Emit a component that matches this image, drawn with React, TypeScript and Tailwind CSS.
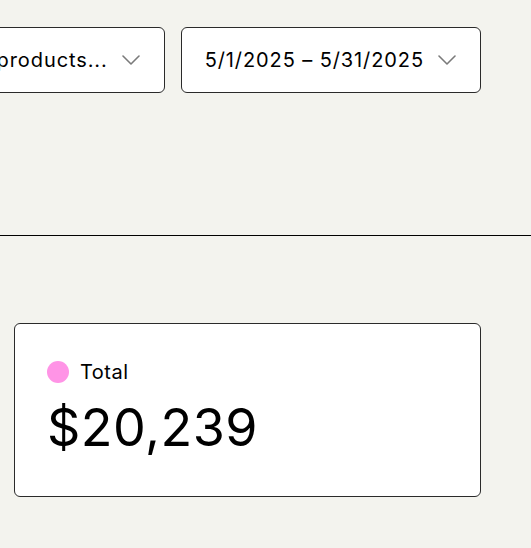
function Chevron() {
  return (
    <svg width="18" height="10" viewBox="0 0 18 10" fill="none" className="shrink-0">
      <path d="M1 1l8 8 8-8" stroke="#7a7a7a" strokeWidth="1.6" strokeLinecap="round" strokeLinejoin="round" />
    </svg>
  )
}

function Select({ label }: { label: string }) {
  return (
    <button className="flex h-[66px] shrink-0 items-center gap-[14px] rounded-md border border-[#2a2a2a] bg-white pl-[23px] pr-6 text-[20px] tracking-[0.9px] text-black whitespace-nowrap">
      <span>{label}</span>
      <Chevron />
    </button>
  )
}

export default function App() {
  return (
    <div className="min-h-[548px] w-full overflow-hidden bg-[#f3f3ee] font-['Inter',sans-serif] text-black">
      <div className="flex justify-end gap-4 pr-[50px] pt-[27px]">
        <Select label="All products..." />
        <Select label="5/1/2025 – 5/31/2025" />
      </div>

      <div className="mt-[142px] h-px w-full bg-black" />

      <div className="pl-[14px] pr-[50px] pt-[87px]">
        <div className="flex h-[174px] flex-col rounded-md border border-[#2a2a2a] bg-white px-8 pt-[34px]">
          <div className="flex items-center gap-[11px]">
            <span className="h-[22px] w-[22px] rounded-full bg-[#ff94e6]" />
            <span className="text-[20px] leading-7 tracking-[0.5px]">Total</span>
          </div>
          <div className="mt-[12px] text-[52px] leading-[60px] tracking-[0.5px]">$20,239</div>
        </div>
      </div>
    </div>
  )
}
